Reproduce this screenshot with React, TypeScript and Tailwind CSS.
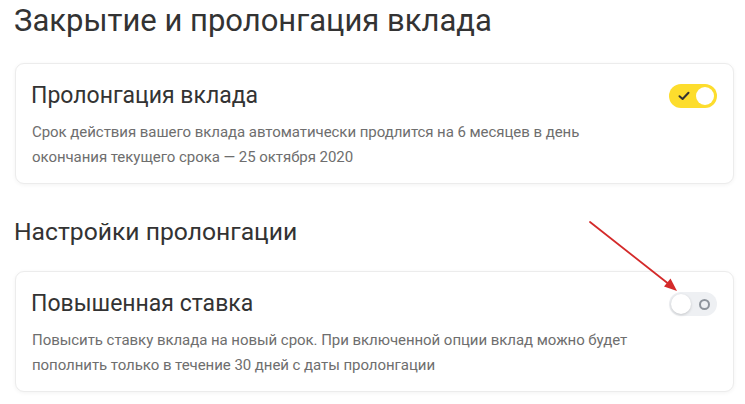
import React from 'react';

type ToggleProps = { on: boolean };

const Toggle: React.FC<ToggleProps> = ({ on }) =>
  on ? (
    <div className="flex h-[24px] w-[48px] shrink-0 items-center justify-between rounded-full bg-[#fddd2d] pl-[9px] pr-[3px]">
      <svg width="12" height="10" viewBox="0 0 12 10" fill="none">
        <path d="M1.5 5.2 4.6 8 10.5 1.8" stroke="#333" strokeWidth="2" strokeLinecap="round" strokeLinejoin="round" />
      </svg>
      <div className="h-[18px] w-[18px] rounded-full bg-white" />
    </div>
  ) : (
    <div className="flex h-[24px] w-[48px] shrink-0 items-center justify-between rounded-full bg-[#eef0f3] pl-[2px] pr-[7px]">
      <div className="h-[20px] w-[20px] rounded-full bg-white shadow-[0_1px_3px_rgba(0,0,0,0.18)]" />
      <div className="h-[11px] w-[11px] rounded-full border-2 border-[#8e949c]" />
    </div>
  );

type OptionCardProps = { title: string; lines: string[]; on: boolean };

const OptionCard: React.FC<OptionCardProps> = ({ title, lines, on }) => (
  <div className="rounded-[9px] border border-[#ececec] bg-white px-4 pb-[13px] pt-[16px] shadow-[0_1px_4px_rgba(0,0,0,0.05)]">
    <div className="flex items-center justify-between">
      <h2 className="-ml-[1px] text-[23px] leading-[32px] text-[#333333]">{title}</h2>
      <Toggle on={on} />
    </div>
    <p className="mt-[8px] text-[15px] leading-[25px] tracking-[-0.05px] text-[#6e6e6e]">
      {lines.map((l, i) => (
        <React.Fragment key={i}>
          {l}
          {i < lines.length - 1 && <br />}
        </React.Fragment>
      ))}
    </p>
  </div>
);

const App: React.FC = () => (
  <div
    className="relative h-[404px] w-[745px] overflow-hidden bg-white pl-[15px] pr-[11px]"
    style={{ fontFamily: 'Roboto, "Noto Sans", sans-serif' }}
  >
    {/* Header */}
    <h1 className="-ml-[1px] pt-[1px] text-[31px] leading-[40px] text-[#333333]">Закрытие и пролонгация вклада</h1>

    <div className="mt-[22px]">
      <OptionCard
        title="Пролонгация вклада"
        on
        lines={[
          'Срок действия вашего вклада автоматически продлится на 6 месяцев в день',
          'окончания текущего срока — 25 октября 2020',
        ]}
      />
    </div>

    <h2 className="-ml-[1px] mt-[31px] text-[24.7px] leading-[34px] text-[#333333]">Настройки пролонгации</h2>

    <div className="mt-[22px]">
      <OptionCard
        title="Повышенная ставка"
        on={false}
        lines={[
          'Повысить ставку вклада на новый срок. При включенной опции вклад можно будет',
          'пополнить только в течение 30 дней с даты пролонгации',
        ]}
      />
    </div>

    {/* Annotation arrow */}
    <svg className="pointer-events-none absolute left-0 top-0" width="745" height="404" viewBox="0 0 745 404">
      <line x1="590" y1="222" x2="670" y2="285" stroke="#d42a2a" strokeWidth="1.8" strokeLinecap="round" />
      <path d="M677 291 L664 286.5 L670.5 278.5 Z" fill="#d42a2a" />
    </svg>
  </div>
);

export default App;
